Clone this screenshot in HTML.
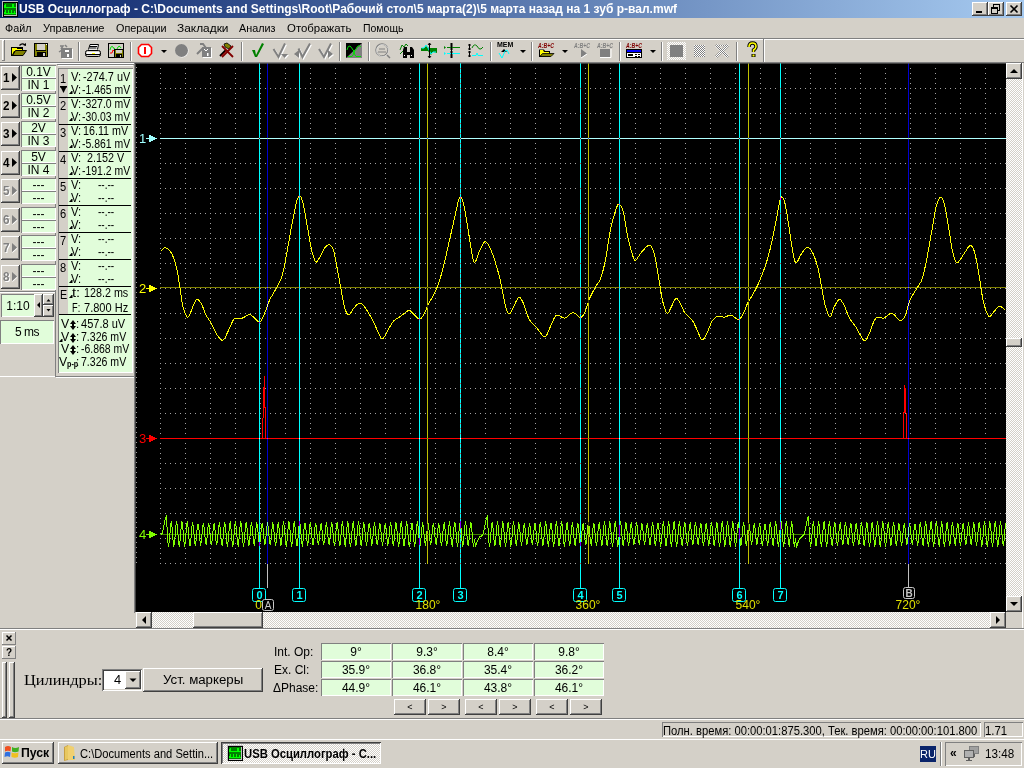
<!DOCTYPE html>
<html><head><meta charset="utf-8"><style>
*{margin:0;padding:0;box-sizing:border-box}
html,body{width:1024px;height:768px;overflow:hidden;background:#D4D0C8;font-family:"Liberation Sans",sans-serif;font-size:11px;color:#000}
.a{position:absolute}
.t{position:absolute;white-space:nowrap;line-height:13px}
.rz{position:absolute;background:#D4D0C8;box-shadow:inset -1px -1px #404040,inset 1px 1px #fff,inset -2px -2px #808080,inset 2px 2px #D4D0C8}
.rz1{position:absolute;background:#D4D0C8;box-shadow:inset -1px -1px #808080,inset 1px 1px #fff}
.sk{position:absolute;box-shadow:inset 1px 1px #808080,inset -1px -1px #fff}
.sk2{position:absolute;box-shadow:inset 1px 1px #808080,inset -1px -1px #fff,inset 2px 2px #404040,inset -2px -2px #D4D0C8}
.dith{background-color:#D4D0C8;background-image:linear-gradient(45deg,#fff 25%,transparent 25%,transparent 75%,#fff 75%),linear-gradient(45deg,#fff 25%,transparent 25%,transparent 75%,#fff 75%);background-size:2px 2px;background-position:0 0,1px 1px}
.vsep{position:absolute;width:2px;border-left:1px solid #808080;border-right:1px solid #fff}
.hsep{position:absolute;height:2px;border-top:1px solid #808080;border-bottom:1px solid #fff}
svg{position:absolute;overflow:visible}
</style></head><body>
<div class="a" style="left:0;top:0;width:1024px;height:18px;background:linear-gradient(to right,#0A246A,#A6CAF0)"></div>
<svg style="left:2px;top:1px" width="17" height="17" shape-rendering="crispEdges"><rect x="0" y="0" width="16" height="16" fill="#C0C0C0"/><rect x="1" y="1" width="15" height="15" fill="#000"/><rect x="2" y="2" width="13" height="13" fill="#C0C0C0"/><rect x="2" y="2" width="12" height="12" fill="#008000"/>
<g fill="#00FF00"><rect x="2" y="4" width="2" height="3"/><rect x="3" y="3" width="1" height="1"/><rect x="4" y="6" width="6" height="1"/><rect x="10" y="3" width="2" height="4"/><rect x="12" y="6" width="2" height="1"/>
<rect x="2" y="12" width="12" height="1"/><rect x="2" y="11" width="1" height="1"/><rect x="3" y="9" width="1" height="3"/><rect x="6" y="9" width="1" height="3"/><rect x="9" y="9" width="1" height="3"/><rect x="12" y="10" width="1" height="2"/></g></svg>
<div class="t" style="left:19px;top:2px;color:#fff;font-weight:bold;font-size:12px;line-height:14px;transform:scaleX(1.0020);transform-origin:0 0;">USB Осциллограф - C:\Documents and Settings\Root\Рабочий стол\5 марта(2)\5 марта назад на 1 зуб р-вал.mwf</div><div class="rz" style="left:972px;top:2px;width:16px;height:14px"></div><div class="rz" style="left:988px;top:2px;width:16px;height:14px"></div><div class="rz" style="left:1006px;top:2px;width:16px;height:14px"></div><svg style="left:972px;top:2px" width="16" height="14" shape-rendering="crispEdges"><rect x="4" y="9" width="6" height="2" fill="#000"/></svg>
<svg style="left:988px;top:2px" width="16" height="14" shape-rendering="crispEdges"><rect x="5" y="2" width="6" height="6" fill="none" stroke="#000" stroke-width="1" transform="translate(0.5,0.5)"/><rect x="5" y="2" width="6" height="1" fill="#000"/><rect x="3" y="5" width="6" height="6" fill="#D4D0C8" stroke="#000" transform="translate(0.5,0.5)"/><rect x="3" y="5" width="7" height="2" fill="#000"/></svg>
<svg style="left:1006px;top:2px" width="16" height="14"><path d="M4.5,3.5 L11.5,10.5 M11.5,3.5 L4.5,10.5" stroke="#000" stroke-width="1.6"/></svg>
<div class="t" style="left:5px;top:22px;transform:scaleX(0.9798);transform-origin:0 0;">Файл</div><div class="t" style="left:43px;top:22px;transform:scaleX(1.0056);transform-origin:0 0;">Управление</div><div class="t" style="left:116px;top:22px;transform:scaleX(0.9812);transform-origin:0 0;">Операции</div><div class="t" style="left:177px;top:22px;transform:scaleX(1.0817);transform-origin:0 0;">Закладки</div><div class="t" style="left:239px;top:22px;transform:scaleX(0.9828);transform-origin:0 0;">Анализ</div><div class="t" style="left:287px;top:22px;transform:scaleX(1.0380);transform-origin:0 0;">Отображать</div><div class="t" style="left:363px;top:22px;transform:scaleX(0.9529);transform-origin:0 0;">Помощь</div><div class="hsep" style="left:0;top:38px;width:1024px"></div><div class="rz1" style="left:2px;top:40px;width:3px;height:21px"></div><div class="a" style="left:0;top:62px;width:1024px;height:1px;background:#808080"></div><div class="vsep" style="left:78px;top:42px;height:19px"></div><div class="vsep" style="left:130px;top:42px;height:19px"></div><div class="vsep" style="left:241px;top:42px;height:19px"></div><div class="vsep" style="left:339px;top:42px;height:19px"></div><div class="vsep" style="left:368px;top:42px;height:19px"></div><div class="vsep" style="left:490px;top:42px;height:19px"></div><div class="vsep" style="left:531px;top:42px;height:19px"></div><div class="vsep" style="left:619px;top:42px;height:19px"></div><div class="vsep" style="left:661px;top:42px;height:19px"></div><div class="vsep" style="left:736px;top:42px;height:19px"></div><div class="vsep" style="left:763px;top:39px;height:23px"></div><svg style="left:0;top:0" width="770" height="62">
<!-- open folder -->
<path d="M19.5,45.5 Q22,42.5 25,45" fill="none" stroke="#000" stroke-width="1.2"/><path d="M23,45 L26,46 L26,43 Z" fill="#000"/>
<rect x="11" y="47" width="12" height="9" fill="#000"/><rect x="12" y="48" width="5" height="1" fill="#000"/>
<path d="M12,48 L17,48 L17,49 L22,49 L22,51 L14,51 L12,55 Z" fill="#FFFF00"/>
<path d="M12.5,55.5 L15.5,50.5 L26.5,50.5 L23,55.5 Z" fill="#808000" stroke="#000"/>
<!-- floppy -->
<rect x="34" y="43" width="14" height="14" fill="#000"/><rect x="35" y="44" width="12" height="12" fill="#808000"/>
<rect x="37" y="44" width="8" height="6" fill="#D4D0C8"/><rect x="36" y="50" width="10" height="1" fill="#000"/>
<rect x="37" y="52" width="9" height="5" fill="#000"/><rect x="43" y="53" width="2" height="3" fill="#D4D0C8"/><rect x="46" y="44" width="1" height="1" fill="#fff"/>
<!-- gray disabled -->
<path d="M60,46 L63,46 L61,49 M65,45 L67,47 M59,52 L62,50" stroke="#808080" stroke-width="1.5" fill="none"/>
<rect x="62" y="49" width="11" height="10" fill="#fff"/><rect x="61" y="48" width="11" height="10" fill="#808080"/>
<rect x="65" y="50" width="4" height="2" fill="#fff"/><rect x="67" y="54" width="2" height="3" fill="#fff"/>
<!-- printer -->
<path d="M88.5,49.5 L90,44.5 L98.5,44.5 L97.5,49.5" fill="#fff" stroke="#000"/>
<path d="M90,46.5 H97 M89.5,48 H96.5" stroke="#000"/>
<rect x="85.5" y="50.5" width="15" height="6" rx="2" fill="#D4D0C8" stroke="#000"/>
<rect x="87" y="52" width="12" height="2" fill="#fff"/><rect x="92" y="53" width="3" height="1" fill="#FFFF00"/>
<rect x="86" y="54" width="14" height="1" fill="#000"/>
<!-- save image -->
<rect x="108.5" y="43.5" width="15" height="14" fill="#D4D0C8" stroke="#000"/>
<path d="M110,50 Q111,45 113,47 Q114,50 115,48" stroke="#00E000" fill="none"/><path d="M117,49 Q119,44 121,48" stroke="#00E000" fill="none"/>
<path d="M110,53 L112,53 L113,50 L115,52" stroke="#FF0000" fill="none"/>
<rect x="114" y="49" width="10" height="9" fill="#000"/><rect x="115" y="50" width="8" height="7" fill="#808000"/>
<rect x="116" y="50" width="6" height="3" fill="#D4D0C8"/><rect x="116" y="54" width="6" height="3" fill="#000"/><rect x="120" y="55" width="1" height="2" fill="#D4D0C8"/>
<!-- stop -->
<path d="M141.5,44.5 L148.5,44.5 L151.5,47.5 L151.5,53.5 L148.5,56.5 L141.5,56.5 L138.5,53.5 L138.5,47.5 Z" fill="#fff" stroke="#FF0000" stroke-width="1.6"/>
<rect x="144" y="47" width="2" height="7" fill="#FF0000"/>
<path d="M161,50 L167,50 L164,53 Z" fill="#000"/>
<!-- gray circle -->
<circle cx="182" cy="51" r="6.5" fill="#fff"/><circle cx="181.5" cy="50.5" r="6.5" fill="#808080"/>
<!-- gray tool -->
<path d="M197,54 L203,48 M200,44 L203,44 L206,48" stroke="#808080" stroke-width="2" fill="none"/>
<rect x="203" y="48" width="9" height="10" fill="#fff"/><rect x="202" y="47" width="9" height="10" fill="#808080"/>
<path d="M204,49 L206,51 L208,49" stroke="#fff" fill="none"/><rect x="207" y="53" width="1.5" height="3" fill="#fff"/>
<!-- red x tool -->
<path d="M220,56 L226,50" stroke="#000" stroke-width="2"/><path d="M221,56 L227,50" stroke="#800000" stroke-width="1"/>
<path d="M224,44 L227,43 L231,46 L229,49 L225,47 Z" fill="#808000" stroke="#000" stroke-width="0.8"/>
<path d="M222,46 L233,57 M233,46 L222,57" stroke="#800000" stroke-width="1.8"/>
<!-- green check -->
<path d="M252,50 L255,50 L256,55 L262,43 L264,44 L257,57 L255,57 Z" fill="#008000"/>
<!-- gray checks -->
<g transform="translate(1,1)" fill="none" stroke="#fff" stroke-width="2"><path d="M273.5,49 L278.5,57 L285,43.5"/><path d="M298.5,48.5 L302.5,57 L310,43.5"/><path d="M319,49 L324,57 L331,43.5"/></g>
<g transform="translate(1,1)" fill="#fff"><path d="M281,54 L288,54 L284.5,58 Z"/><path d="M299,50 L294,54 L299,58 Z"/><path d="M328,50 L333,54 L328,58 Z"/></g>
<g fill="none" stroke="#808080" stroke-width="2"><path d="M273.5,49 L278.5,57 L285,43.5"/><path d="M298.5,48.5 L302.5,57 L310,43.5"/><path d="M319,49 L324,57 L331,43.5"/></g>
<g fill="#808080"><path d="M281,54 L288,54 L284.5,58 Z"/><path d="M299,50 L294,54 L299,58 Z"/><path d="M328,50 L333,54 L328,58 Z"/></g>
<!-- black/gray square -->
<rect x="346" y="43" width="16" height="15" fill="#808080"/><path d="M346,43 L362,43 L346,58 Z" fill="#000"/>
<path d="M347,50 Q348,45 350,46 Q352,48 353,50 Q355,53 357,47 Q359,44 361,47" stroke="#00E000" fill="none"/>
<path d="M348,56.5 L352,56.5 Q354,55 354,50 Q354,55 356,56.5 L361,56.5" stroke="#00E000" fill="none"/>
<!-- gray magnifier -->
<circle cx="382" cy="50" r="6" fill="none" stroke="#808080" stroke-width="1.5"/><circle cx="382.5" cy="50.5" r="6" fill="none" stroke="#fff" stroke-width="0.6"/>
<path d="M378,52 H386 M379,49 H385" stroke="#808080" stroke-width="1.2"/><path d="M387,55 L390,58" stroke="#808080" stroke-width="1.5"/>
<!-- binoculars -->
<path d="M400,50 L402,45 L404,47 L406,44 L408,46" stroke="#008000" fill="none"/><path d="M400,54 L403,51" stroke="#008000"/>
<path d="M404,47 H407 V58 H403 V50 Z M409,47 H412 L414,50 V58 H410 V47 Z M406,52 H411 V55 H406 Z" fill="#000"/>
<rect x="404" y="55" width="1" height="1" fill="#fff"/><rect x="411" y="55" width="1" height="1" fill="#fff"/>
<!-- green block -->
<path d="M421,48 L424,48 L426,46 L429,48 L437,48 L437,53 L433,52 L431,55 L428,51 L421,51 Z" fill="#008000"/>
<path d="M421.5,48 L424,48 L426,45 L428,48 L431,54 L433,52 L436,52" stroke="#00FFFF" fill="none"/>
<path d="M429.5,43 V58 M428,45 L429.5,43 L431,45 M428,56 L429.5,58 L431,56" stroke="#000" fill="none"/>
<!-- cursors -->
<path d="M447,47.5 H460" stroke="#008000"/><path d="M444,46 L446,47.5 L444,49 Z" fill="#008000"/>
<path d="M447,53.5 H460" stroke="#00FFFF"/><path d="M444,52 L446,53.5 L444,55 Z" fill="#00FFFF"/>
<path d="M451.5,43 V58" stroke="#000"/><path d="M450,44 H453 M450,46 H453 M450,49 H453 M450,52 H453 M450,55 H453 M450,57 H453" stroke="#000"/>
<!-- curves -->
<path d="M469.5,44 V50 M469.5,51 V57 M468,45 H471 M468,49 H471 M468,52 H471 M468,56 H471" stroke="#000"/>
<path d="M472,48 Q474,43 477,46 Q479,50 481,49 L483,47" stroke="#008000" fill="none"/>
<path d="M472,55.5 H476 L477,53 L478,55.5 H483" stroke="#00FFFF" fill="none"/>
<!-- MEM -->
<text x="497" y="47" font-family="Liberation Sans" font-size="7" font-weight="bold" fill="#000">MEM</text>
<path d="M501,52 L504,49 L507,52 Z" fill="#000"/><path d="M499,53 L502,58 L505,51 L507,50 L509,54" stroke="#00FFFF" fill="none"/>
<path d="M520,50 L526,50 L523,53 Z" fill="#000"/>
<!-- ABC open -->
<text x="538" y="48" font-family="Liberation Sans" font-size="7" font-weight="bold" font-style="italic" textLength="16" lengthAdjust="spacingAndGlyphs" fill="#800000">A:B+C</text>
<path d="M539,49.5 L544,49.5 L545,51 L550,51 L550,57 L539,57 Z" fill="#000"/><path d="M540,50 L543,50 L544,52 L549,52 L549,54 L542,54 L540,56 Z" fill="#FFFF00"/>
<path d="M540,56.5 L542.5,53.5 L554,53.5 L551,56.5 Z" fill="#808000" stroke="#000" stroke-width="0.8"/>
<path d="M562,50 L568,50 L565,53 Z" fill="#000"/>
<!-- ABC play gray -->
<text x="574" y="48" font-family="Liberation Sans" font-size="7" font-weight="bold" font-style="italic" textLength="16" lengthAdjust="spacingAndGlyphs" fill="#808080">A:B+C</text>
<path d="M581,49 L587,53.5 L581,58 Z" fill="#808080"/><path d="M581,58 L587,54" stroke="#fff"/>
<text x="597" y="48" font-family="Liberation Sans" font-size="7" font-weight="bold" font-style="italic" textLength="16" lengthAdjust="spacingAndGlyphs" fill="#808080">A:B+C</text>
<rect x="600" y="49" width="10" height="8" fill="#808080"/><path d="M600,57.5 H611 V49" stroke="#fff" fill="none"/>
<!-- ABC window -->
<text x="626" y="48" font-family="Liberation Sans" font-size="7" font-weight="bold" font-style="italic" textLength="16" lengthAdjust="spacingAndGlyphs" fill="#800000">A:B+C</text>
<rect x="626" y="49" width="16" height="9" fill="#000"/><rect x="627" y="50" width="14" height="2" fill="#0000FF"/><rect x="627" y="53" width="14" height="4" fill="#fff"/>
<rect x="628" y="54" width="5" height="2" fill="#000"/><rect x="635" y="54" width="2" height="1" fill="#000"/><rect x="638" y="54" width="2" height="1" fill="#000"/><rect x="635" y="56" width="2" height="1" fill="#000"/><rect x="638" y="56" width="2" height="1" fill="#000"/>
<path d="M650,50 L656,50 L653,53 Z" fill="#000"/>
<!-- dithered square -->
<rect x="667" y="42" width="19" height="18" fill="url(#dith)"/><rect x="670" y="45" width="13" height="12" fill="#808080"/>
<rect x="694" y="45" width="11" height="12" fill="url(#dithg)"/>
<path d="M716,45 L728,57 M728,45 L716,57" stroke="url(#dithg)" stroke-width="3"/><path d="M716,45.5 H728" stroke="url(#dithg)" stroke-width="1.5"/>
<!-- help -->
<path d="M749,47 Q749,43 752.5,43 Q756,43 756,46.5 Q756,48.5 753.5,50 L753.5,52" fill="none" stroke="#000" stroke-width="3.4"/>
<path d="M749,47 Q749,43 752.5,43 Q756,43 756,46.5 Q756,48.5 753.5,50 L753.5,52" fill="none" stroke="#FFFF00" stroke-width="1.6"/>
<rect x="751.5" y="54" width="4" height="3" fill="#000"/><rect x="752.5" y="54.5" width="2" height="2" fill="#FFFF00"/>
<defs>
<pattern id="dith" width="2" height="2" patternUnits="userSpaceOnUse"><rect width="2" height="2" fill="#D4D0C8"/><rect width="1" height="1" fill="#fff"/><rect x="1" y="1" width="1" height="1" fill="#fff"/></pattern>
<pattern id="dithg" width="2" height="2" patternUnits="userSpaceOnUse"><rect width="2" height="2" fill="#fff"/><rect width="1" height="1" fill="#808080"/><rect x="1" y="1" width="1" height="1" fill="#808080"/></pattern>
</defs>
</svg><div class="a" style="left:0;top:63px;width:135px;height:1px;background:#fff"></div><div class="a" style="left:0;top:65px;width:56px;height:1px;background:#808080"></div><div class="a" style="left:55px;top:65px;width:1px;height:312px;background:#808080"></div><div class="a" style="left:0;top:376px;width:55px;height:1px;background:#fff"></div><div class="a" style="left:55px;top:376px;width:80px;height:1px;background:#808080"></div><div class="a" style="left:56px;top:377px;width:79px;height:1px;background:#fff"></div><div class="rz" style="left:1px;top:66px;width:19px;height:24px"></div><div class="t" style="left:3px;top:71px;font-weight:bold;font-size:13px;line-height:14px;color:#000;transform:scaleX(0.8985);transform-origin:0 0;">1</div><svg style="left:12px;top:73px" width="6" height="10"><path d="M0,0 L5,4.5 L0,9 Z" fill="#000"/></svg><div class="sk" style="left:21px;top:65px;width:35px;height:13px;background:#E1FDDA"></div><div class="sk" style="left:21px;top:78px;width:35px;height:13px;background:#E1FDDA"></div><div class="t" style="left:21px;top:65px;width:35px;text-align:center;font-size:12px;line-height:14px;">0.1V</div><div class="t" style="left:21px;top:78px;width:35px;text-align:center;font-size:12px;line-height:14px;">IN 1</div><div class="rz" style="left:1px;top:94px;width:19px;height:24px"></div><div class="t" style="left:3px;top:99px;font-weight:bold;font-size:13px;line-height:14px;color:#000;transform:scaleX(0.8985);transform-origin:0 0;">2</div><svg style="left:12px;top:101px" width="6" height="10"><path d="M0,0 L5,4.5 L0,9 Z" fill="#000"/></svg><div class="sk" style="left:21px;top:93px;width:35px;height:13px;background:#E1FDDA"></div><div class="sk" style="left:21px;top:106px;width:35px;height:13px;background:#E1FDDA"></div><div class="t" style="left:21px;top:93px;width:35px;text-align:center;font-size:12px;line-height:14px;">0.5V</div><div class="t" style="left:21px;top:106px;width:35px;text-align:center;font-size:12px;line-height:14px;">IN 2</div><div class="rz" style="left:1px;top:122px;width:19px;height:24px"></div><div class="t" style="left:3px;top:127px;font-weight:bold;font-size:13px;line-height:14px;color:#000;transform:scaleX(0.8985);transform-origin:0 0;">3</div><svg style="left:12px;top:129px" width="6" height="10"><path d="M0,0 L5,4.5 L0,9 Z" fill="#000"/></svg><div class="sk" style="left:21px;top:121px;width:35px;height:13px;background:#E1FDDA"></div><div class="sk" style="left:21px;top:134px;width:35px;height:13px;background:#E1FDDA"></div><div class="t" style="left:21px;top:121px;width:35px;text-align:center;font-size:12px;line-height:14px;">2V</div><div class="t" style="left:21px;top:134px;width:35px;text-align:center;font-size:12px;line-height:14px;">IN 3</div><div class="rz" style="left:1px;top:151px;width:19px;height:24px"></div><div class="t" style="left:3px;top:156px;font-weight:bold;font-size:13px;line-height:14px;color:#000;transform:scaleX(0.8985);transform-origin:0 0;">4</div><svg style="left:12px;top:158px" width="6" height="10"><path d="M0,0 L5,4.5 L0,9 Z" fill="#000"/></svg><div class="sk" style="left:21px;top:150px;width:35px;height:13px;background:#E1FDDA"></div><div class="sk" style="left:21px;top:163px;width:35px;height:13px;background:#E1FDDA"></div><div class="t" style="left:21px;top:150px;width:35px;text-align:center;font-size:12px;line-height:14px;">5V</div><div class="t" style="left:21px;top:163px;width:35px;text-align:center;font-size:12px;line-height:14px;">IN 4</div><div class="rz" style="left:1px;top:179px;width:19px;height:24px"></div><div class="t" style="left:3px;top:184px;font-weight:bold;font-size:13px;line-height:14px;color:#808080;text-shadow:1px 1px #fff;transform:scaleX(0.8985);transform-origin:0 0;">5</div><svg style="left:12px;top:186px" width="6" height="10"><path d="M0,0 L5,4.5 L0,9 Z" fill="#808080"/><path d="M0.5,9.5 L5.5,5" stroke="#fff"/></svg><div class="sk" style="left:21px;top:178px;width:35px;height:13px;background:#E1FDDA"></div><div class="sk" style="left:21px;top:191px;width:35px;height:13px;background:#E1FDDA"></div><div class="t" style="left:21px;top:178px;width:35px;text-align:center;font-size:12px;line-height:14px;">---</div><div class="t" style="left:21px;top:191px;width:35px;text-align:center;font-size:12px;line-height:14px;">---</div><div class="rz" style="left:1px;top:208px;width:19px;height:24px"></div><div class="t" style="left:3px;top:213px;font-weight:bold;font-size:13px;line-height:14px;color:#808080;text-shadow:1px 1px #fff;transform:scaleX(0.8985);transform-origin:0 0;">6</div><svg style="left:12px;top:215px" width="6" height="10"><path d="M0,0 L5,4.5 L0,9 Z" fill="#808080"/><path d="M0.5,9.5 L5.5,5" stroke="#fff"/></svg><div class="sk" style="left:21px;top:207px;width:35px;height:13px;background:#E1FDDA"></div><div class="sk" style="left:21px;top:220px;width:35px;height:13px;background:#E1FDDA"></div><div class="t" style="left:21px;top:207px;width:35px;text-align:center;font-size:12px;line-height:14px;">---</div><div class="t" style="left:21px;top:220px;width:35px;text-align:center;font-size:12px;line-height:14px;">---</div><div class="rz" style="left:1px;top:236px;width:19px;height:24px"></div><div class="t" style="left:3px;top:241px;font-weight:bold;font-size:13px;line-height:14px;color:#808080;text-shadow:1px 1px #fff;transform:scaleX(0.8985);transform-origin:0 0;">7</div><svg style="left:12px;top:243px" width="6" height="10"><path d="M0,0 L5,4.5 L0,9 Z" fill="#808080"/><path d="M0.5,9.5 L5.5,5" stroke="#fff"/></svg><div class="sk" style="left:21px;top:235px;width:35px;height:13px;background:#E1FDDA"></div><div class="sk" style="left:21px;top:248px;width:35px;height:13px;background:#E1FDDA"></div><div class="t" style="left:21px;top:235px;width:35px;text-align:center;font-size:12px;line-height:14px;">---</div><div class="t" style="left:21px;top:248px;width:35px;text-align:center;font-size:12px;line-height:14px;">---</div><div class="rz" style="left:1px;top:265px;width:19px;height:24px"></div><div class="t" style="left:3px;top:270px;font-weight:bold;font-size:13px;line-height:14px;color:#808080;text-shadow:1px 1px #fff;transform:scaleX(0.8985);transform-origin:0 0;">8</div><svg style="left:12px;top:272px" width="6" height="10"><path d="M0,0 L5,4.5 L0,9 Z" fill="#808080"/><path d="M0.5,9.5 L5.5,5" stroke="#fff"/></svg><div class="sk" style="left:21px;top:264px;width:35px;height:13px;background:#E1FDDA"></div><div class="sk" style="left:21px;top:277px;width:35px;height:13px;background:#E1FDDA"></div><div class="t" style="left:21px;top:264px;width:35px;text-align:center;font-size:12px;line-height:14px;">---</div><div class="t" style="left:21px;top:277px;width:35px;text-align:center;font-size:12px;line-height:14px;">---</div><div class="hsep" style="left:0;top:291px;width:55px"></div><div class="sk" style="left:1px;top:294px;width:34px;height:23px;background:#E1FDDA"></div><div class="t" style="left:1px;top:298px;width:34px;text-align:center;font-size:12px;line-height:16px">1:10</div><div class="rz" style="left:34px;top:294px;width:9px;height:23px"></div><svg style="left:37px;top:302px" width="4" height="6"><path d="M3,0 L0,3 L3,6 Z" fill="#000"/></svg><div class="rz" style="left:43px;top:294px;width:11px;height:11px"></div><div class="rz" style="left:43px;top:305px;width:11px;height:12px"></div><svg style="left:45px;top:297px" width="8" height="18"><path d="M1.5,4.5 L3.5,2 L5.5,4.5 Z" fill="#000"/><path d="M1.5,12 L3.5,14.5 L5.5,12 Z" fill="#000"/></svg><div class="sk" style="left:0;top:320px;width:54px;height:24px;background:#E1FDDA"></div><div class="t" style="left:0;top:324px;width:54px;text-align:center;font-size:12px;line-height:16px;letter-spacing:-0.5px">5 ms</div><div class="a" style="left:57px;top:64px;width:77px;height:1px;background:#808080"></div><div class="a" style="left:58px;top:65px;width:75px;height:1px;background:#fff"></div><div class="sk" style="left:58px;top:68px;width:75px;height:305px;background:#E1FDDA"></div><div class="a" style="left:59px;top:69px;width:9px;height:246px;background:#D4D0C8"></div><div class="a" style="left:59px;top:97px;width:72px;height:1px;background:#000"></div><div class="a" style="left:59px;top:124px;width:72px;height:1px;background:#000"></div><div class="a" style="left:59px;top:151px;width:72px;height:1px;background:#000"></div><div class="a" style="left:59px;top:178px;width:72px;height:1px;background:#000"></div><div class="a" style="left:59px;top:205px;width:72px;height:1px;background:#000"></div><div class="a" style="left:59px;top:232px;width:72px;height:1px;background:#000"></div><div class="a" style="left:59px;top:259px;width:72px;height:1px;background:#000"></div><div class="a" style="left:59px;top:286px;width:72px;height:1px;background:#000"></div><div class="a" style="left:59px;top:314px;width:72px;height:1px;background:#000"></div><div class="t" style="left:60.4px;top:72px;font-size:12px;line-height:14px;transform:scaleX(0.9271);transform-origin:0 0;">1</div><div class="t" style="left:71.4px;top:70px;font-size:12px;line-height:14px;transform:scaleX(0.9352);transform-origin:0 0;">V:</div><div class="t" style="left:71.4px;top:83px;font-size:12px;line-height:14px;transform:scaleX(0.9352);transform-origin:0 0;">V:</div><svg style="left:69px;top:91px" width="6" height="4"><path d="M0,3 L2.5,0 L3.5,0 L3.5,3 Z" fill="#000"/></svg><div class="t" style="left:83.4px;top:70px;font-size:12px;line-height:14px;transform:scaleX(0.9069);transform-origin:0 0;">-274.7 uV</div><div class="t" style="left:82.4px;top:83px;font-size:12px;line-height:14px;transform:scaleX(0.8707);transform-origin:0 0;">-1.465 mV</div><div class="t" style="left:60.4px;top:99px;font-size:12px;line-height:14px;transform:scaleX(0.9271);transform-origin:0 0;">2</div><div class="t" style="left:71.4px;top:97px;font-size:12px;line-height:14px;transform:scaleX(0.9352);transform-origin:0 0;">V:</div><div class="t" style="left:71.4px;top:110px;font-size:12px;line-height:14px;transform:scaleX(0.9352);transform-origin:0 0;">V:</div><svg style="left:69px;top:118px" width="6" height="4"><path d="M0,3 L2.5,0 L3.5,0 L3.5,3 Z" fill="#000"/></svg><div class="t" style="left:82.4px;top:97px;font-size:12px;line-height:14px;transform:scaleX(0.8707);transform-origin:0 0;">-327.0 mV</div><div class="t" style="left:82.4px;top:110px;font-size:12px;line-height:14px;transform:scaleX(0.8707);transform-origin:0 0;">-30.03 mV</div><div class="t" style="left:60.4px;top:126px;font-size:12px;line-height:14px;transform:scaleX(0.9271);transform-origin:0 0;">3</div><div class="t" style="left:71.4px;top:124px;font-size:12px;line-height:14px;transform:scaleX(0.9352);transform-origin:0 0;">V:</div><div class="t" style="left:71.4px;top:137px;font-size:12px;line-height:14px;transform:scaleX(0.9352);transform-origin:0 0;">V:</div><svg style="left:69px;top:145px" width="6" height="4"><path d="M0,3 L2.5,0 L3.5,0 L3.5,3 Z" fill="#000"/></svg><div class="t" style="left:83.4px;top:124px;font-size:12px;line-height:14px;transform:scaleX(0.8953);transform-origin:0 0;">16.11 mV</div><div class="t" style="left:82.4px;top:137px;font-size:12px;line-height:14px;transform:scaleX(0.8707);transform-origin:0 0;">-5.861 mV</div><div class="t" style="left:60.4px;top:153px;font-size:12px;line-height:14px;transform:scaleX(0.9271);transform-origin:0 0;">4</div><div class="t" style="left:71.4px;top:151px;font-size:12px;line-height:14px;transform:scaleX(0.9352);transform-origin:0 0;">V:</div><div class="t" style="left:71.4px;top:164px;font-size:12px;line-height:14px;transform:scaleX(0.9352);transform-origin:0 0;">V:</div><svg style="left:69px;top:172px" width="6" height="4"><path d="M0,3 L2.5,0 L3.5,0 L3.5,3 Z" fill="#000"/></svg><div class="t" style="left:87.4px;top:151px;font-size:12px;line-height:14px;transform:scaleX(0.8991);transform-origin:0 0;">2.152 V</div><div class="t" style="left:82.4px;top:164px;font-size:12px;line-height:14px;transform:scaleX(0.8707);transform-origin:0 0;">-191.2 mV</div><div class="t" style="left:60.4px;top:180px;font-size:12px;line-height:14px;transform:scaleX(0.9271);transform-origin:0 0;">5</div><div class="t" style="left:71.4px;top:178px;font-size:12px;line-height:14px;transform:scaleX(0.9352);transform-origin:0 0;">V:</div><div class="t" style="left:71.4px;top:191px;font-size:12px;line-height:14px;transform:scaleX(0.9352);transform-origin:0 0;">V:</div><svg style="left:69px;top:199px" width="6" height="4"><path d="M0,3 L2.5,0 L3.5,0 L3.5,3 Z" fill="#000"/></svg><div class="t" style="left:98.4px;top:178px;font-size:12px;line-height:14px;transform:scaleX(0.8382);transform-origin:0 0;">--.--</div><div class="t" style="left:98.4px;top:191px;font-size:12px;line-height:14px;transform:scaleX(0.8382);transform-origin:0 0;">--.--</div><div class="t" style="left:60.4px;top:207px;font-size:12px;line-height:14px;transform:scaleX(0.9271);transform-origin:0 0;">6</div><div class="t" style="left:71.4px;top:205px;font-size:12px;line-height:14px;transform:scaleX(0.9352);transform-origin:0 0;">V:</div><div class="t" style="left:71.4px;top:218px;font-size:12px;line-height:14px;transform:scaleX(0.9352);transform-origin:0 0;">V:</div><svg style="left:69px;top:226px" width="6" height="4"><path d="M0,3 L2.5,0 L3.5,0 L3.5,3 Z" fill="#000"/></svg><div class="t" style="left:98.4px;top:205px;font-size:12px;line-height:14px;transform:scaleX(0.8382);transform-origin:0 0;">--.--</div><div class="t" style="left:98.4px;top:218px;font-size:12px;line-height:14px;transform:scaleX(0.8382);transform-origin:0 0;">--.--</div><div class="t" style="left:60.4px;top:234px;font-size:12px;line-height:14px;transform:scaleX(0.9271);transform-origin:0 0;">7</div><div class="t" style="left:71.4px;top:232px;font-size:12px;line-height:14px;transform:scaleX(0.9352);transform-origin:0 0;">V:</div><div class="t" style="left:71.4px;top:245px;font-size:12px;line-height:14px;transform:scaleX(0.9352);transform-origin:0 0;">V:</div><svg style="left:69px;top:253px" width="6" height="4"><path d="M0,3 L2.5,0 L3.5,0 L3.5,3 Z" fill="#000"/></svg><div class="t" style="left:98.4px;top:232px;font-size:12px;line-height:14px;transform:scaleX(0.8382);transform-origin:0 0;">--.--</div><div class="t" style="left:98.4px;top:245px;font-size:12px;line-height:14px;transform:scaleX(0.8382);transform-origin:0 0;">--.--</div><div class="t" style="left:60.4px;top:261px;font-size:12px;line-height:14px;transform:scaleX(0.9271);transform-origin:0 0;">8</div><div class="t" style="left:71.4px;top:259px;font-size:12px;line-height:14px;transform:scaleX(0.9352);transform-origin:0 0;">V:</div><div class="t" style="left:71.4px;top:272px;font-size:12px;line-height:14px;transform:scaleX(0.9352);transform-origin:0 0;">V:</div><svg style="left:69px;top:280px" width="6" height="4"><path d="M0,3 L2.5,0 L3.5,0 L3.5,3 Z" fill="#000"/></svg><div class="t" style="left:98.4px;top:259px;font-size:12px;line-height:14px;transform:scaleX(0.8382);transform-origin:0 0;">--.--</div><div class="t" style="left:98.4px;top:272px;font-size:12px;line-height:14px;transform:scaleX(0.8382);transform-origin:0 0;">--.--</div><svg style="left:60px;top:86px" width="8" height="8"><path d="M0,0 H7 L3.5,7 Z" fill="#000"/><rect x="0" y="0" width="7" height="1.5" fill="#000"/></svg><div class="t" style="left:60.4px;top:288px;font-size:12px;line-height:14px;transform:scaleX(0.8982);transform-origin:0 0;">E</div><svg style="left:69px;top:295px" width="6" height="4"><path d="M0,3 L2.5,0 L3.5,0 L3.5,3 Z" fill="#000"/></svg><div class="t" style="left:72.4px;top:286px;font-size:12px;line-height:14px;transform:scaleX(1.2290);transform-origin:0 0;">t:</div><div class="t" style="left:84.4px;top:286px;font-size:12px;line-height:14px;transform:scaleX(0.8955);transform-origin:0 0;">128.2 ms</div><div class="t" style="left:72.4px;top:301px;font-size:12px;line-height:14px;transform:scaleX(0.7684);transform-origin:0 0;">F:</div><div class="t" style="left:84.4px;top:301px;font-size:12px;line-height:14px;transform:scaleX(0.9202);transform-origin:0 0;">7.800 Hz</div><div class="t" style="left:61.4px;top:317px;font-size:12px;line-height:14px;transform:scaleX(1.0230);transform-origin:0 0;">V</div><svg style="left:70px;top:320px" width="7" height="11"><path d="M0,4 L3,0 L6,4 Z M0,6 L3,10 L6,6 Z" fill="#000"/><rect x="2" y="2" width="2" height="6" fill="#000"/></svg><div class="t" style="left:76.4px;top:317px;font-size:12px;line-height:14px;transform:scaleX(0.9570);transform-origin:0 0;">:</div><div class="t" style="left:81.4px;top:317px;font-size:12px;line-height:14px;transform:scaleX(0.9199);transform-origin:0 0;">457.8 uV</div><div class="t" style="left:61.4px;top:330px;font-size:12px;line-height:14px;transform:scaleX(1.0230);transform-origin:0 0;">V</div><svg style="left:70px;top:333px" width="7" height="11"><path d="M0,4 L3,0 L6,4 Z M0,6 L3,10 L6,6 Z" fill="#000"/><rect x="2" y="2" width="2" height="6" fill="#000"/></svg><div class="t" style="left:76.4px;top:330px;font-size:12px;line-height:14px;transform:scaleX(0.9570);transform-origin:0 0;">:</div><div class="t" style="left:81.4px;top:330px;font-size:12px;line-height:14px;transform:scaleX(0.8798);transform-origin:0 0;">7.326 mV</div><div class="t" style="left:61.4px;top:342px;font-size:12px;line-height:14px;transform:scaleX(1.0230);transform-origin:0 0;">V</div><svg style="left:70px;top:345px" width="7" height="11"><path d="M0,4 L3,0 L6,4 Z M0,6 L3,10 L6,6 Z" fill="#000"/><rect x="2" y="2" width="2" height="6" fill="#000"/></svg><div class="t" style="left:76.4px;top:342px;font-size:12px;line-height:14px;transform:scaleX(0.9570);transform-origin:0 0;">:</div><div class="t" style="left:81.4px;top:342px;font-size:12px;line-height:14px;transform:scaleX(0.8707);transform-origin:0 0;">-6.868 mV</div><svg style="left:59px;top:339px" width="6" height="4"><path d="M0,3 L2.5,0 L3.5,0 L3.5,3 Z" fill="#000"/></svg><div class="t" style="left:59.4px;top:355px;font-size:12px;line-height:14px;transform:scaleX(1.0230);transform-origin:0 0;">V</div><div class="t" style="left:67px;top:359px;font-size:9px;font-weight:bold;line-height:10px;transform:scaleX(0.8);transform-origin:0 0">p-p</div><div class="t" style="left:76.4px;top:355px;font-size:12px;line-height:14px;transform:scaleX(0.9570);transform-origin:0 0;">:</div><div class="t" style="left:81.4px;top:355px;font-size:12px;line-height:14px;transform:scaleX(0.8798);transform-origin:0 0;">7.326 mV</div><div class="a" style="left:134px;top:63px;width:1px;height:550px;background:#808080"></div><div class="a" style="left:135px;top:63px;width:871px;height:549px;background:#000;box-shadow:inset 1px 1px #404040"></div><svg style="left:0;top:0" width="1024" height="768">
<path d="M160,68V564M185,68V564M210,68V564M235,68V564M260,68V564M285,68V564M310,68V564M335,68V564M360,68V564M385,68V564M410,68V564M435,68V564M460,68V564M485,68V564M510,68V564M535,68V564M560,68V564M585,68V564M610,68V564M635,68V564M660,68V564M685,68V564M710,68V564M735,68V564M760,68V564M785,68V564M810,68V564M835,68V564M860,68V564M885,68V564M910,68V564M935,68V564M960,68V564M985,68V564" stroke="#A4A4A4" stroke-width="1" stroke-dasharray="1 4" shape-rendering="crispEdges" transform="translate(0.5,0)"/>
<path d="M160,88H1006M160,113H1006M160,138H1006M160,163H1006M160,188H1006M160,213H1006M160,238H1006M160,263H1006M160,288H1006M160,313H1006M160,338H1006M160,363H1006M160,388H1006M160,413H1006M160,438H1006M160,463H1006M160,488H1006M160,513H1006M160,538H1006M160,563H1006" stroke="#A4A4A4" stroke-width="1" stroke-dasharray="1 4" shape-rendering="crispEdges" transform="translate(0,0.5)"/>
<path d="M136,67V564" stroke="#A4A4A4" stroke-width="1" stroke-dasharray="1 4" shape-rendering="crispEdges" transform="translate(0.5,0)"/><g shape-rendering="crispEdges">
<rect x="160" y="138" width="846" height="1" fill="#B0FFFF"/>
<rect x="160" y="287" width="846" height="1" fill="#808000"/>
<rect x="160" y="438" width="846" height="1" fill="#FF0000"/>
<rect x="160" y="534" width="846" height="1" fill="#408000"/>
</g>
<text x="139" y="143" font-family="Liberation Sans" font-size="13" fill="#A0FFFF">1</text>
<g shape-rendering="crispEdges"><rect x="146" y="138" width="11" height="1" fill="#A0FFFF"/><rect x="149" y="135" width="2" height="7" fill="#A0FFFF"/><rect x="151" y="136" width="2" height="5" fill="#A0FFFF"/><rect x="153" y="137" width="2" height="3" fill="#A0FFFF"/></g>
<text x="139" y="293" font-family="Liberation Sans" font-size="13" fill="#FFFF00">2</text>
<g shape-rendering="crispEdges"><rect x="146" y="288" width="11" height="1" fill="#FFFF00"/><rect x="149" y="285" width="2" height="7" fill="#FFFF00"/><rect x="151" y="286" width="2" height="5" fill="#FFFF00"/><rect x="153" y="287" width="2" height="3" fill="#FFFF00"/></g>
<text x="139" y="443" font-family="Liberation Sans" font-size="13" fill="#FF0000">3</text>
<g shape-rendering="crispEdges"><rect x="146" y="438" width="11" height="1" fill="#FF0000"/><rect x="149" y="435" width="2" height="7" fill="#FF0000"/><rect x="151" y="436" width="2" height="5" fill="#FF0000"/><rect x="153" y="437" width="2" height="3" fill="#FF0000"/></g>
<text x="139" y="539" font-family="Liberation Sans" font-size="13" fill="#80FF00">4</text>
<g shape-rendering="crispEdges"><rect x="146" y="534" width="11" height="1" fill="#80FF00"/><rect x="149" y="531" width="2" height="7" fill="#80FF00"/><rect x="151" y="532" width="2" height="5" fill="#80FF00"/><rect x="153" y="533" width="2" height="3" fill="#80FF00"/></g>
<path fill="none" stroke="#FFFF00" stroke-width="1" shape-rendering="crispEdges" d="M160.6,251.5C161.2,250.9 163.0,248.3 164.3,248.0C165.6,247.7 167.1,248.1 168.5,249.4C169.9,250.7 171.3,252.3 172.7,255.6C174.1,258.9 175.6,263.6 176.8,269.0C178.0,274.4 179.0,281.7 180.0,288.0C181.0,294.3 181.8,301.9 183.0,306.7C184.2,311.5 186.0,315.9 187.2,317.0C188.5,318.1 189.2,315.4 190.4,313.0C191.6,310.6 193.3,304.8 194.5,302.5C195.7,300.2 196.5,299.0 197.7,299.4C198.9,299.8 200.4,302.0 201.8,304.6C203.2,307.2 204.4,311.9 206.0,315.0C207.6,318.1 209.5,320.2 211.2,323.3C212.9,326.4 214.5,330.9 216.4,333.8C218.3,336.6 220.8,340.7 222.7,340.4C224.6,340.1 226.0,335.2 227.9,331.7C229.8,328.2 231.9,321.4 234.0,319.2C236.1,317.0 238.7,319.1 240.4,318.8C242.2,318.4 242.9,317.7 244.5,317.0C246.1,316.3 248.2,314.5 249.8,314.6C251.3,314.7 252.3,316.2 254.0,317.5C255.7,318.8 258.0,322.9 259.8,322.3C261.5,321.7 262.7,317.6 264.3,314.0C265.9,310.4 267.9,304.1 269.5,300.4C271.1,296.7 272.7,294.6 274.2,292.0C275.7,289.4 277.1,287.2 278.3,284.8C279.5,282.4 280.4,280.8 281.5,277.5C282.6,274.2 283.4,270.9 284.6,265.0C285.8,259.1 287.4,249.6 288.8,242.0C290.1,234.4 291.5,226.1 292.9,219.2C294.3,212.3 295.8,204.2 297.0,200.4C298.2,196.6 299.1,195.6 300.2,196.2C301.2,196.9 302.1,199.4 303.3,204.6C304.5,209.8 306.1,219.9 307.5,227.5C308.9,235.1 310.3,244.7 311.7,250.4C313.1,256.1 314.4,260.8 315.8,261.9C317.2,262.9 318.4,259.1 320.0,256.7C321.6,254.3 323.6,249.3 325.2,247.3C326.8,245.3 328.0,244.1 329.4,244.6C330.8,245.1 332.1,246.0 333.5,250.4C334.9,254.8 336.3,263.9 337.7,271.2C339.1,278.6 340.7,287.9 341.9,294.2C343.1,300.4 343.9,305.3 345.0,308.8C346.1,312.2 347.4,315.0 348.8,315.0C350.1,315.0 351.7,310.7 353.3,308.8C354.9,306.8 356.9,304.2 358.5,303.5C360.1,302.8 361.1,303.2 362.7,304.6C364.3,306.0 366.0,308.8 367.9,311.9C369.8,315.0 372.5,319.8 374.2,323.3C375.9,326.8 376.9,330.1 378.3,332.7C379.7,335.3 380.9,339.5 382.5,339.0C384.1,338.5 386.4,332.6 388.2,329.6C390.0,326.6 391.5,323.4 393.4,321.2C395.3,319.1 397.7,318.4 399.6,317.0C401.5,315.6 403.2,314.1 404.8,313.0C406.4,311.9 407.8,310.1 409.4,310.4C411.0,310.7 412.5,313.1 414.2,314.6C415.9,316.1 417.8,319.1 419.4,319.2C421.0,319.3 422.0,317.6 423.6,315.0C425.2,312.4 427.1,307.0 428.8,303.5C430.5,300.0 432.3,297.8 434.0,294.2C435.7,290.6 437.5,286.9 439.2,281.7C440.9,276.5 442.8,269.1 444.4,262.9C446.0,256.6 447.0,251.1 448.6,244.2C450.2,237.3 452.2,228.2 453.8,221.2C455.4,214.3 456.9,206.5 458.0,202.5C459.1,198.5 459.7,196.6 460.7,197.3C461.7,198.0 462.9,201.0 464.2,206.7C465.5,212.4 467.0,223.4 468.4,231.7C469.8,240.0 471.4,251.7 472.5,256.7C473.6,261.7 474.0,262.9 475.2,261.9C476.5,260.8 478.2,253.8 479.8,250.4C481.4,247.0 483.3,242.0 485.0,241.7C486.7,241.3 488.5,244.8 490.2,248.3C492.0,251.8 493.9,258.0 495.5,262.9C497.1,267.8 498.5,273.0 499.6,277.5C500.7,282.0 501.1,284.8 502.2,290.0C503.3,295.2 505.1,304.8 506.3,308.8C507.5,312.8 508.3,314.3 509.5,314.0C510.7,313.7 512.1,309.5 513.6,306.7C515.1,303.9 517.2,298.0 518.8,297.3C520.4,296.6 521.3,298.9 523.0,302.5C524.7,306.1 527.0,315.0 529.2,319.2C531.5,323.4 533.9,324.6 536.5,327.5C539.1,330.4 542.6,336.9 544.9,336.9C547.1,336.9 548.1,331.1 550.0,327.5C551.9,323.9 553.8,317.0 556.3,315.4C558.8,313.8 561.9,318.6 564.7,318.1C567.5,317.6 570.4,312.6 573.0,312.5C575.6,312.4 578.4,317.4 580.3,317.5C582.2,317.6 582.9,316.1 584.5,312.9C586.1,309.7 587.8,302.7 589.7,298.3C591.6,293.9 594.2,289.4 595.9,286.2C597.6,283.1 598.5,283.8 600.1,279.6C601.7,275.4 603.6,269.1 605.3,260.8C607.0,252.5 608.7,238.3 610.5,229.6C612.3,220.9 614.7,213.0 616.2,208.8C617.7,204.5 618.1,203.5 619.3,204.2C620.5,204.9 622.1,207.6 623.5,212.9C624.9,218.2 626.2,229.2 627.6,235.8C629.0,242.4 630.5,248.4 631.8,252.5C633.1,256.6 633.7,260.4 635.3,260.4C636.9,260.4 638.9,255.0 641.2,252.5C643.5,250.0 647.0,245.4 649.1,245.2C651.2,245.0 652.4,247.8 653.7,251.5C655.0,255.2 655.8,261.4 656.8,267.1C657.8,272.8 658.9,279.9 659.9,285.8C660.9,291.7 661.8,297.9 663.0,302.5C664.2,307.1 665.8,312.6 667.2,313.3C668.6,314.0 669.9,309.2 671.4,306.7C672.9,304.2 674.6,298.6 676.2,298.3C677.8,298.0 679.3,302.2 680.8,304.6C682.2,307.0 683.0,310.3 684.9,312.9C686.8,315.5 690.1,317.2 692.2,320.2C694.3,323.1 695.8,327.3 697.4,330.6C699.0,333.9 700.4,339.5 702.0,340.0C703.6,340.5 705.1,336.9 706.8,333.8C708.5,330.6 710.3,324.1 712.0,321.2C713.7,318.4 715.1,317.2 717.2,316.5C719.3,315.8 722.3,317.4 724.5,317.1C726.7,316.9 728.6,315.0 730.2,315.0C731.8,315.0 732.8,316.2 734.3,317.0C735.8,317.8 737.3,320.3 738.9,319.6C740.5,318.9 742.2,315.8 743.7,312.9C745.2,310.0 746.4,305.6 747.9,302.5C749.4,299.4 751.3,297.3 753.0,294.2C754.7,291.1 756.2,288.6 758.3,283.8C760.4,278.9 763.5,271.2 765.6,265.0C767.7,258.8 769.1,253.5 770.8,246.2C772.5,239.0 774.4,229.1 776.0,221.2C777.6,213.4 779.0,203.2 780.2,199.4C781.4,195.6 782.3,196.4 783.3,198.3C784.3,200.2 785.2,204.2 786.4,210.8C787.6,217.4 789.4,230.2 790.6,237.9C791.8,245.6 792.7,252.5 793.7,256.7C794.7,260.9 795.2,263.2 796.4,262.9C797.6,262.5 799.3,257.2 801.0,254.6C802.7,252.0 804.9,247.7 806.8,247.3C808.7,247.0 810.7,249.2 812.5,252.5C814.3,255.8 816.2,261.6 817.7,267.1C819.2,272.7 820.2,279.6 821.4,285.8C822.6,292.1 823.6,299.4 825.0,304.6C826.4,309.8 828.2,316.6 829.8,317.0C831.3,317.4 832.7,309.6 834.3,306.7C835.9,303.8 837.9,299.6 839.5,299.4C841.1,299.2 842.6,302.5 844.2,305.6C845.9,308.7 847.5,314.6 849.4,318.1C851.3,321.6 853.7,323.6 855.6,326.5C857.5,329.4 859.2,333.4 860.8,335.8C862.4,338.2 863.6,341.3 865.0,341.0C866.4,340.7 867.6,337.2 869.2,333.8C870.8,330.3 872.9,323.0 874.4,320.2C875.9,317.4 876.9,317.5 878.5,317.1C880.1,316.8 881.5,318.7 883.8,318.1C886.0,317.5 889.2,312.9 892.0,313.3C894.8,313.8 898.1,320.5 900.4,320.8C902.7,321.1 904.1,318.3 905.6,315.0C907.1,311.7 907.6,305.7 909.6,301.0C911.6,296.3 915.7,290.5 917.7,286.9C919.8,283.3 920.5,283.6 921.9,279.6C923.3,275.6 924.4,270.7 926.0,262.9C927.6,255.1 929.8,242.1 931.5,232.7C933.2,223.3 934.7,212.5 936.2,206.6C937.7,200.7 939.1,197.6 940.5,197.3C941.9,197.0 943.1,199.6 944.5,204.6C945.9,209.6 947.2,219.5 948.6,227.5C950.0,235.5 951.4,246.6 952.8,252.5C954.2,258.4 955.2,262.5 957.0,262.9C958.8,263.2 961.4,257.4 963.5,254.6C965.6,251.8 968.0,246.5 969.8,245.8C971.5,245.1 972.6,246.5 974.0,250.4C975.4,254.3 976.7,261.6 978.1,269.2C979.5,276.8 981.1,289.7 982.3,296.2C983.5,302.8 984.2,305.3 985.4,308.8C986.5,312.2 987.8,316.2 989.2,316.7C990.6,317.2 992.0,313.6 993.8,311.9C995.5,310.2 997.7,306.5 999.6,306.2C1001.5,306.0 1004.3,309.7 1005.2,310.4"/>
<g shape-rendering="crispEdges" fill="#FF0000">
<rect x="262" y="418" width="1" height="20"/><rect x="263" y="387" width="1" height="31"/><rect x="264" y="376" width="1" height="31"/><rect x="265" y="407" width="1" height="31"/><rect x="263" y="407" width="2" height="1"/>
<rect x="903" y="412" width="1" height="26"/><rect x="904" y="385" width="1" height="28"/><rect x="905" y="388" width="1" height="25"/><rect x="906" y="413" width="1" height="25"/>
</g><polyline fill="none" stroke="#80FF00" stroke-width="1" shape-rendering="crispEdges" points="160.5,534 161.5,534 162.5,533 163.5,528 164.5,523 165.5,518 166.5,516 167.5,538 168.5,547 169.5,540 170.5,526 171.5,521 172.5,533 173.5,546 174.5,544 175.5,530 176.5,521 177.5,527 178.5,542 179.5,547 180.5,536 181.5,522 182.5,523 183.5,537 184.5,547 185.5,541 186.5,526 187.5,521 188.5,532 189.5,545 190.5,545 191.5,531 192.5,522 193.5,527 194.5,541 195.5,546 196.5,536 197.5,524 198.5,524 199.5,536 200.5,546 201.5,541 202.5,528 203.5,523 204.5,531 205.5,543 206.5,544 207.5,532 208.5,523 209.5,527 210.5,540 211.5,545 212.5,537 213.5,525 214.5,524 215.5,536 216.5,545 217.5,541 218.5,528 219.5,522 220.5,531 221.5,544 222.5,545 223.5,533 224.5,522 225.5,526 226.5,540 227.5,547 228.5,538 229.5,524 230.5,522 231.5,535 232.5,547 233.5,543 234.5,528 235.5,521 236.5,530 237.5,544 238.5,546 239.5,533 240.5,521 241.5,525 242.5,539 243.5,547 244.5,539 245.5,525 246.5,522 247.5,534 248.5,546 249.5,543 250.5,529 251.5,522 252.5,529 253.5,543 254.5,545 255.5,534 256.5,523 257.5,525 258.5,538 259.5,546 260.5,539 261.5,526 262.5,523 263.5,533 264.5,544 265.5,543 266.5,530 267.5,522 268.5,529 269.5,542 270.5,545 271.5,535 272.5,523 273.5,525 274.5,538 275.5,546 276.5,540 277.5,526 278.5,522 279.5,533 280.5,545 281.5,544 282.5,530 283.5,521 284.5,528 285.5,542 286.5,547 287.5,536 288.5,522 289.5,523 290.5,537 291.5,547 292.5,541 293.5,526 294.5,521 295.5,532 296.5,545 297.5,545 298.5,531 299.5,521 300.5,527 301.5,541 302.5,547 303.5,536 304.5,523 305.5,523 306.5,536 307.5,546 308.5,541 309.5,527 310.5,522 311.5,531 312.5,544 313.5,544 314.5,532 315.5,523 316.5,527 317.5,540 318.5,545 319.5,537 320.5,525 321.5,524 322.5,536 323.5,545 324.5,541 325.5,528 326.5,522 327.5,531 328.5,543 329.5,544 330.5,533 331.5,522 332.5,526 333.5,540 334.5,546 335.5,538 336.5,524 337.5,523 338.5,535 339.5,546 340.5,543 341.5,528 342.5,521 343.5,530 344.5,544 345.5,546 346.5,533 347.5,521 348.5,525 349.5,540 350.5,547 351.5,539 352.5,524 353.5,522 354.5,534 355.5,546 356.5,543 357.5,529 358.5,521 359.5,529 360.5,543 361.5,546 362.5,534 363.5,523 364.5,525 365.5,538 366.5,546 367.5,539 368.5,526 369.5,523 370.5,533 371.5,545 372.5,543 373.5,530 374.5,522 375.5,529 376.5,542 377.5,545 378.5,535 379.5,524 380.5,525 381.5,538 382.5,546 383.5,539 384.5,527 385.5,523 386.5,533 387.5,545 388.5,543 389.5,531 390.5,522 391.5,528 392.5,542 393.5,546 394.5,536 395.5,523 396.5,524 397.5,537 398.5,547 399.5,541 400.5,526 401.5,521 402.5,532 403.5,545 404.5,545 405.5,531 406.5,521 407.5,527 408.5,542 409.5,547 410.5,537 411.5,523 412.5,523 413.5,537 414.5,547 415.5,541 416.5,527 417.5,521 418.5,531 419.5,544 420.5,545 421.5,532 422.5,522 423.5,527 424.5,540 425.5,546 426.5,537 427.5,525 428.5,524 429.5,536 430.5,545 431.5,541 432.5,528 433.5,523 434.5,531 435.5,543 436.5,544 437.5,533 438.5,523 439.5,527 440.5,539 441.5,546 442.5,538 443.5,525 444.5,523 445.5,535 446.5,546 447.5,542 448.5,529 449.5,521 450.5,530 451.5,544 452.5,546 453.5,533 454.5,522 455.5,525 456.5,539 457.5,547 458.5,539 459.5,524 460.5,522 461.5,534 462.5,547 463.5,543 464.5,529 465.5,521 466.5,529 467.5,543 468.5,546 469.5,534 470.5,522 471.5,525 472.5,539 473.5,547 474.5,539 475.5,547 476.5,543 477.5,541 478.5,539 479.5,537 480.5,536 481.5,536 482.5,535 483.5,533 484.5,528 485.5,523 486.5,518 487.5,516 488.5,539 489.5,547 490.5,539 491.5,525 492.5,522 493.5,534 494.5,546 495.5,543 496.5,529 497.5,521 498.5,529 499.5,543 500.5,547 501.5,534 502.5,522 503.5,524 504.5,539 505.5,547 506.5,539 507.5,525 508.5,522 509.5,533 510.5,546 511.5,544 512.5,530 513.5,521 514.5,528 515.5,542 516.5,546 517.5,535 518.5,523 519.5,525 520.5,538 521.5,546 522.5,539 523.5,527 524.5,523 525.5,533 526.5,544 527.5,543 528.5,531 529.5,523 530.5,528 531.5,541 532.5,545 533.5,536 534.5,524 535.5,525 536.5,537 537.5,546 538.5,540 539.5,527 540.5,522 541.5,532 542.5,545 543.5,544 544.5,531 545.5,521 546.5,527 547.5,541 548.5,547 549.5,536 550.5,523 551.5,523 552.5,537 553.5,547 554.5,542 555.5,527 556.5,521 557.5,531 558.5,545 559.5,545 560.5,532 561.5,521 562.5,526 563.5,541 564.5,547 565.5,537 566.5,524 567.5,523 568.5,536 569.5,546 570.5,542 571.5,528 572.5,522 573.5,531 574.5,544 575.5,545 576.5,533 577.5,523 578.5,526 579.5,539 580.5,546 581.5,538 582.5,525 583.5,524 584.5,535 585.5,545 586.5,542 587.5,529 588.5,522 589.5,530 590.5,543 591.5,545 592.5,533 593.5,523 594.5,526 595.5,539 596.5,546 597.5,538 598.5,525 599.5,523 600.5,534 601.5,546 602.5,543 603.5,529 604.5,521 605.5,529 606.5,543 607.5,546 608.5,534 609.5,522 610.5,524 611.5,539 612.5,547 613.5,540 614.5,525 615.5,521 616.5,533 617.5,546 618.5,544 619.5,530 620.5,521 621.5,528 622.5,543 623.5,546 624.5,535 625.5,523 626.5,524 627.5,538 628.5,546 629.5,540 630.5,526 631.5,522 632.5,533 633.5,544 634.5,543 635.5,531 636.5,522 637.5,528 638.5,541 639.5,545 640.5,536 641.5,524 642.5,525 643.5,537 644.5,545 645.5,540 646.5,527 647.5,523 648.5,532 649.5,544 650.5,544 651.5,531 652.5,522 653.5,527 654.5,541 655.5,546 656.5,536 657.5,523 658.5,523 659.5,536 660.5,547 661.5,541 662.5,527 663.5,521 664.5,531 665.5,545 666.5,545 667.5,532 668.5,521 669.5,526 670.5,541 671.5,547 672.5,537 673.5,523 674.5,522 675.5,536 676.5,547 677.5,542 678.5,528 679.5,521 680.5,530 681.5,544 682.5,545 683.5,533 684.5,522 685.5,526 686.5,540 687.5,546 688.5,538 689.5,525 690.5,523 691.5,535 692.5,545 693.5,542 694.5,529 695.5,522 696.5,530 697.5,543 698.5,544 699.5,533 700.5,523 701.5,526 702.5,539 703.5,546 704.5,538 705.5,526 706.5,523 707.5,534 708.5,545 709.5,543 710.5,529 711.5,522 712.5,529 713.5,543 714.5,546 715.5,534 716.5,522 717.5,525 718.5,539 719.5,547 720.5,539 721.5,525 722.5,521 723.5,533 724.5,546 725.5,544 726.5,530 727.5,521 728.5,528 729.5,543 730.5,547 731.5,535 732.5,522 733.5,524 734.5,538 735.5,547 736.5,540 737.5,526 738.5,522 739.5,533 740.5,545 741.5,544 742.5,531 743.5,522 744.5,528 745.5,541 746.5,546 747.5,536 748.5,524 749.5,525 750.5,537 751.5,545 752.5,540 753.5,527 754.5,523 755.5,532 756.5,544 757.5,543 758.5,531 759.5,523 760.5,528 761.5,541 762.5,546 763.5,536 764.5,524 765.5,524 766.5,536 767.5,546 768.5,541 769.5,527 770.5,522 771.5,531 772.5,544 773.5,545 774.5,532 775.5,521 776.5,526 777.5,541 778.5,547 779.5,537 780.5,523 781.5,522 782.5,536 783.5,547 784.5,542 785.5,527 786.5,521 787.5,530 788.5,544 789.5,546 790.5,533 791.5,521 792.5,526 793.5,540 794.5,547 795.5,538 796.5,548 797.5,544 798.5,541 799.5,539 800.5,538 801.5,537 802.5,536 803.5,535 804.5,534 805.5,529 806.5,524 807.5,519 808.5,516 809.5,536 810.5,547 811.5,541 812.5,527 813.5,521 814.5,531 815.5,545 816.5,545 817.5,532 818.5,521 819.5,526 820.5,541 821.5,547 822.5,537 823.5,523 824.5,522 825.5,536 826.5,547 827.5,542 828.5,527 829.5,521 830.5,530 831.5,544 832.5,545 833.5,533 834.5,522 835.5,526 836.5,540 837.5,546 838.5,538 839.5,525 840.5,523 841.5,535 842.5,545 843.5,542 844.5,529 845.5,522 846.5,530 847.5,543 848.5,544 849.5,533 850.5,523 851.5,526 852.5,539 853.5,546 854.5,538 855.5,526 856.5,523 857.5,534 858.5,545 859.5,542 860.5,529 861.5,522 862.5,529 863.5,543 864.5,546 865.5,534 866.5,522 867.5,525 868.5,539 869.5,547 870.5,539 871.5,525 872.5,522 873.5,533 874.5,546 875.5,544 876.5,530 877.5,521 878.5,528 879.5,543 880.5,547 881.5,535 882.5,522 883.5,524 884.5,538 885.5,547 886.5,540 887.5,526 888.5,522 889.5,533 890.5,545 891.5,544 892.5,531 893.5,522 894.5,528 895.5,541 896.5,546 897.5,536 898.5,524 899.5,525 900.5,537 901.5,546 902.5,540 903.5,527 904.5,523 905.5,532 906.5,544 907.5,543 908.5,531 909.5,523 910.5,528 911.5,541 912.5,545 913.5,536 914.5,524 915.5,524 916.5,536 917.5,546 918.5,541 919.5,527 920.5,522 921.5,531 922.5,544 923.5,545 924.5,532 925.5,521 926.5,526 927.5,541 928.5,547 929.5,537 930.5,523 931.5,522 932.5,536 933.5,547 934.5,542 935.5,527 936.5,521 937.5,530 938.5,544 939.5,546 940.5,533 941.5,521 942.5,526 943.5,540 944.5,547 945.5,538 946.5,524 947.5,523 948.5,535 949.5,546 950.5,542 951.5,529 952.5,522 953.5,530 954.5,543 955.5,545 956.5,533 957.5,523 958.5,526 959.5,539 960.5,546 961.5,538 962.5,526 963.5,523 964.5,534 965.5,545 966.5,542 967.5,530 968.5,522 969.5,529 970.5,542 971.5,545 972.5,534 973.5,523 974.5,525 975.5,538 976.5,546 977.5,539 978.5,525 979.5,522 980.5,533 981.5,546 982.5,544 983.5,530 984.5,521 985.5,528 986.5,543 987.5,547 988.5,535 989.5,522 990.5,524 991.5,538 992.5,547 993.5,540 994.5,525 995.5,521 996.5,533 997.5,546 998.5,544 999.5,530 1000.5,521 1001.5,528 1002.5,542 1003.5,546 1004.5,536 1005.5,523"/>
<g shape-rendering="crispEdges" style="mix-blend-mode:difference">
<rect x="259" y="63" width="1" height="525" fill="#00FFFF"/>
<rect x="299" y="63" width="1" height="525" fill="#00FFFF"/>
<rect x="419" y="63" width="1" height="525" fill="#00FFFF"/>
<rect x="460" y="63" width="1" height="525" fill="#00FFFF"/>
<rect x="580" y="63" width="1" height="525" fill="#00FFFF"/>
<rect x="619" y="63" width="1" height="525" fill="#00FFFF"/>
<rect x="739" y="63" width="1" height="525" fill="#00FFFF"/>
<rect x="780" y="63" width="1" height="525" fill="#00FFFF"/>
<rect x="427" y="63" width="1" height="501" fill="#C0C000"/>
<rect x="588" y="63" width="1" height="501" fill="#C0C000"/>
<rect x="748" y="63" width="1" height="501" fill="#C0C000"/>
<rect x="267" y="63" width="1" height="501" fill="#0000D0"/>
<rect x="267" y="564" width="1" height="24" fill="#C0C0C0"/>
<rect x="908" y="63" width="1" height="501" fill="#0000D0"/>
<rect x="908" y="564" width="1" height="24" fill="#C0C0C0"/>
</g>
<rect x="252.5" y="588.5" width="13" height="13" rx="2" fill="#000" stroke="#00FFFF" stroke-width="1"/>
<text x="259.5" y="599" text-anchor="middle" font-family="Liberation Sans" font-size="11" font-weight="bold" fill="#00FFFF">0</text>
<rect x="292.5" y="588.5" width="13" height="13" rx="2" fill="#000" stroke="#00FFFF" stroke-width="1"/>
<text x="299.5" y="599" text-anchor="middle" font-family="Liberation Sans" font-size="11" font-weight="bold" fill="#00FFFF">1</text>
<rect x="412.5" y="588.5" width="13" height="13" rx="2" fill="#000" stroke="#00FFFF" stroke-width="1"/>
<text x="419.5" y="599" text-anchor="middle" font-family="Liberation Sans" font-size="11" font-weight="bold" fill="#00FFFF">2</text>
<rect x="453.5" y="588.5" width="13" height="13" rx="2" fill="#000" stroke="#00FFFF" stroke-width="1"/>
<text x="460.5" y="599" text-anchor="middle" font-family="Liberation Sans" font-size="11" font-weight="bold" fill="#00FFFF">3</text>
<rect x="573.5" y="588.5" width="13" height="13" rx="2" fill="#000" stroke="#00FFFF" stroke-width="1"/>
<text x="580.5" y="599" text-anchor="middle" font-family="Liberation Sans" font-size="11" font-weight="bold" fill="#00FFFF">4</text>
<rect x="612.5" y="588.5" width="13" height="13" rx="2" fill="#000" stroke="#00FFFF" stroke-width="1"/>
<text x="619.5" y="599" text-anchor="middle" font-family="Liberation Sans" font-size="11" font-weight="bold" fill="#00FFFF">5</text>
<rect x="732.5" y="588.5" width="13" height="13" rx="2" fill="#000" stroke="#00FFFF" stroke-width="1"/>
<text x="739.5" y="599" text-anchor="middle" font-family="Liberation Sans" font-size="11" font-weight="bold" fill="#00FFFF">6</text>
<rect x="773.5" y="588.5" width="13" height="13" rx="2" fill="#000" stroke="#00FFFF" stroke-width="1"/>
<text x="780.5" y="599" text-anchor="middle" font-family="Liberation Sans" font-size="11" font-weight="bold" fill="#00FFFF">7</text>
<text x="261" y="609" text-anchor="middle" font-family="Liberation Sans" font-size="12" fill="#E0E000">0°</text>
<text x="428" y="609" text-anchor="middle" font-family="Liberation Sans" font-size="12" fill="#E0E000">180°</text>
<text x="588" y="609" text-anchor="middle" font-family="Liberation Sans" font-size="12" fill="#E0E000">360°</text>
<text x="748" y="609" text-anchor="middle" font-family="Liberation Sans" font-size="12" fill="#E0E000">540°</text>
<text x="908" y="609" text-anchor="middle" font-family="Liberation Sans" font-size="12" fill="#E0E000">720°</text>
<rect x="262.5" y="599.5" width="11" height="11" rx="2" fill="#000" stroke="#C8C8C8"/>
<text x="268" y="609" text-anchor="middle" font-family="Liberation Sans" font-size="10" fill="#C8C8C8">A</text>
<rect x="903.5" y="587.5" width="11" height="11" rx="2" fill="#000" stroke="#C8C8C8"/>
<text x="909" y="597" text-anchor="middle" font-family="Liberation Sans" font-size="10" font-weight="bold" fill="#C8C8C8">B</text>
</svg><div class="a dith" style="left:1006px;top:63px;width:16px;height:549px"></div><div class="rz" style="left:1006px;top:63px;width:16px;height:16px"></div><svg style="left:1006px;top:63px" width="16" height="16"><path d="M4,10 L8,6 L12,10 Z" fill="#000"/></svg><div class="rz" style="left:1006px;top:338px;width:16px;height:9px"></div><div class="rz" style="left:1006px;top:596px;width:16px;height:16px"></div><svg style="left:1006px;top:596px" width="16" height="16"><path d="M4,6 L8,10 L12,6 Z" fill="#000"/></svg><div class="a dith" style="left:136px;top:612px;width:870px;height:16px"></div><div class="rz" style="left:136px;top:612px;width:16px;height:16px"></div><svg style="left:136px;top:612px" width="16" height="16"><path d="M10,4 L6,8 L10,12 Z" fill="#000"/></svg><div class="rz" style="left:193px;top:612px;width:70px;height:16px"></div><div class="rz" style="left:990px;top:612px;width:16px;height:16px"></div><svg style="left:990px;top:612px" width="16" height="16"><path d="M6,4 L10,8 L6,12 Z" fill="#000"/></svg><div class="a" style="left:1006px;top:612px;width:16px;height:16px;background:#D4D0C8"></div><div class="a" style="left:1022px;top:63px;width:1px;height:566px;background:#fff"></div><div class="hsep" style="left:0;top:628px;width:1024px"></div><div class="rz1" style="left:2px;top:632px;width:14px;height:13px"></div><svg style="left:2px;top:632px" width="14" height="13"><path d="M4.5,3.5 L9.5,8.5 M9.5,3.5 L4.5,8.5" stroke="#000" stroke-width="1.5"/></svg><div class="rz1" style="left:2px;top:646px;width:14px;height:13px"></div><div class="t" style="left:2px;top:646px;width:14px;text-align:center;font-weight:bold;font-size:10px;line-height:13px">?</div><div class="rz1" style="left:2px;top:662px;width:5px;height:56px;box-shadow:inset -1px -1px #404040,inset 1px 1px #fff,inset -2px -2px #808080"></div><div class="rz1" style="left:9px;top:662px;width:6px;height:56px;box-shadow:inset -1px -1px #404040,inset 1px 1px #fff,inset -2px -2px #808080"></div><div class="t" style="left:24.4px;top:671px;font-family:'Liberation Serif',serif;font-size:15px;line-height:18px;transform:scaleX(1.0894);transform-origin:0 0;">Цилиндры:</div><div class="sk2" style="left:102px;top:669px;width:40px;height:22px;background:#fff"></div><div class="t" style="left:114.4px;top:673px;font-size:12px;line-height:14px;transform:scaleX(1.0766);transform-origin:0 0;">4</div><div class="rz" style="left:125px;top:671px;width:16px;height:18px"></div><svg style="left:125px;top:671px" width="16" height="18"><path d="M4.5,7.5 L11.5,7.5 L8,11 Z" fill="#000"/></svg><div class="rz" style="left:143px;top:668px;width:120px;height:24px"></div><div class="t" style="left:163.4px;top:673px;font-size:12px;line-height:14px;transform:scaleX(1.1045);transform-origin:0 0;">Уст. маркеры</div><div class="t" style="left:274px;top:645px;font-size:12px;line-height:14px">Int. Op:</div><div class="t" style="left:274px;top:663px;font-size:12px;line-height:14px">Ex. Cl:</div><div class="t" style="left:273px;top:681px;font-size:12px;line-height:14px">ΔPhase:</div><div class="sk" style="left:321px;top:643px;width:70px;height:17px;background:#E1FDDA"></div><div class="t" style="left:321px;top:645px;width:70px;text-align:center;font-size:12px;line-height:14px">9°</div><div class="sk" style="left:392px;top:643px;width:70px;height:17px;background:#E1FDDA"></div><div class="t" style="left:392px;top:645px;width:70px;text-align:center;font-size:12px;line-height:14px">9.3°</div><div class="sk" style="left:463px;top:643px;width:70px;height:17px;background:#E1FDDA"></div><div class="t" style="left:463px;top:645px;width:70px;text-align:center;font-size:12px;line-height:14px">8.4°</div><div class="sk" style="left:534px;top:643px;width:70px;height:17px;background:#E1FDDA"></div><div class="t" style="left:534px;top:645px;width:70px;text-align:center;font-size:12px;line-height:14px">9.8°</div><div class="sk" style="left:321px;top:661px;width:70px;height:17px;background:#E1FDDA"></div><div class="t" style="left:321px;top:663px;width:70px;text-align:center;font-size:12px;line-height:14px">35.9°</div><div class="sk" style="left:392px;top:661px;width:70px;height:17px;background:#E1FDDA"></div><div class="t" style="left:392px;top:663px;width:70px;text-align:center;font-size:12px;line-height:14px">36.8°</div><div class="sk" style="left:463px;top:661px;width:70px;height:17px;background:#E1FDDA"></div><div class="t" style="left:463px;top:663px;width:70px;text-align:center;font-size:12px;line-height:14px">35.4°</div><div class="sk" style="left:534px;top:661px;width:70px;height:17px;background:#E1FDDA"></div><div class="t" style="left:534px;top:663px;width:70px;text-align:center;font-size:12px;line-height:14px">36.2°</div><div class="sk" style="left:321px;top:679px;width:70px;height:17px;background:#E1FDDA"></div><div class="t" style="left:321px;top:681px;width:70px;text-align:center;font-size:12px;line-height:14px">44.9°</div><div class="sk" style="left:392px;top:679px;width:70px;height:17px;background:#E1FDDA"></div><div class="t" style="left:392px;top:681px;width:70px;text-align:center;font-size:12px;line-height:14px">46.1°</div><div class="sk" style="left:463px;top:679px;width:70px;height:17px;background:#E1FDDA"></div><div class="t" style="left:463px;top:681px;width:70px;text-align:center;font-size:12px;line-height:14px">43.8°</div><div class="sk" style="left:534px;top:679px;width:70px;height:17px;background:#E1FDDA"></div><div class="t" style="left:534px;top:681px;width:70px;text-align:center;font-size:12px;line-height:14px">46.1°</div><div class="rz1" style="left:394px;top:699px;width:32px;height:16px;box-shadow:inset -1px -1px #404040,inset 1px 1px #fff,inset -2px -2px #808080"></div><div class="t" style="left:394px;top:700px;width:32px;text-align:center;font-size:9px;line-height:14px">&lt;</div><div class="rz1" style="left:428px;top:699px;width:32px;height:16px;box-shadow:inset -1px -1px #404040,inset 1px 1px #fff,inset -2px -2px #808080"></div><div class="t" style="left:428px;top:700px;width:32px;text-align:center;font-size:9px;line-height:14px">&gt;</div><div class="rz1" style="left:465px;top:699px;width:32px;height:16px;box-shadow:inset -1px -1px #404040,inset 1px 1px #fff,inset -2px -2px #808080"></div><div class="t" style="left:465px;top:700px;width:32px;text-align:center;font-size:9px;line-height:14px">&lt;</div><div class="rz1" style="left:499px;top:699px;width:32px;height:16px;box-shadow:inset -1px -1px #404040,inset 1px 1px #fff,inset -2px -2px #808080"></div><div class="t" style="left:499px;top:700px;width:32px;text-align:center;font-size:9px;line-height:14px">&gt;</div><div class="rz1" style="left:536px;top:699px;width:32px;height:16px;box-shadow:inset -1px -1px #404040,inset 1px 1px #fff,inset -2px -2px #808080"></div><div class="t" style="left:536px;top:700px;width:32px;text-align:center;font-size:9px;line-height:14px">&lt;</div><div class="rz1" style="left:570px;top:699px;width:32px;height:16px;box-shadow:inset -1px -1px #404040,inset 1px 1px #fff,inset -2px -2px #808080"></div><div class="t" style="left:570px;top:700px;width:32px;text-align:center;font-size:9px;line-height:14px">&gt;</div><div class="hsep" style="left:0;top:718px;width:1024px"></div><div class="sk" style="left:662px;top:722px;width:319px;height:15px"></div><div class="t" style="left:663.4px;top:724px;font-size:12px;line-height:14px;transform:scaleX(0.9341);transform-origin:0 0;">Полн. время: 00:00:01:875.300, Тек. время: 00:00:00:101.800</div><div class="sk" style="left:984px;top:722px;width:39px;height:15px"></div><div class="t" style="left:985.4px;top:724px;font-size:12px;line-height:14px;transform:scaleX(0.9504);transform-origin:0 0;">1.71</div><div class="a" style="left:0;top:739px;width:1024px;height:1px;background:#fff"></div><div class="rz" style="left:2px;top:742px;width:52px;height:22px"></div><svg style="left:4px;top:744px" width="16" height="16">
<path d="M1,3 Q4,1 7,3 L6.5,7.5 Q4,6 1,7.5 Z" fill="#F05020"/>
<path d="M8,3 Q11,5 15,3 L14.5,7.5 Q11,9 8,7.5 Z" fill="#40B020"/>
<path d="M1,8.5 Q4,7 6.5,8.5 L6,13 Q3.5,11.5 0.5,13 Z" fill="#3070E0"/>
<path d="M7.5,8.5 Q11,10 14.5,8.5 L14,13 Q11,14.5 7.5,13 Z" fill="#F0C020"/>
</svg><div class="t" style="left:21.4px;top:746px;font-weight:bold;font-size:12px;line-height:14px;transform:scaleX(1.0185);transform-origin:0 0;">Пуск</div><div class="rz" style="left:58px;top:742px;width:160px;height:22px"></div><svg style="left:62px;top:744px" width="16" height="18"><path d="M2,3 L6,1 L6,16 L2,17 Z" fill="#C8A040"/><path d="M6,1 L12,3 L13,16 L6,16 Z" fill="#F0D070"/><path d="M3,3 L6,2 V15 L3,16 Z" fill="#E8C860"/><rect x="11" y="12" width="1.5" height="3" fill="#2080C0"/></svg><div class="t" style="left:80.4px;top:747px;font-size:12px;line-height:14px;transform:scaleX(0.9288);transform-origin:0 0;">C:\Documents and Settin...</div><div class="a dith" style="left:221px;top:742px;width:160px;height:22px;box-shadow:inset 1px 1px #404040,inset -1px -1px #fff,inset 2px 2px #808080"></div><svg style="left:227px;top:745px" width="17" height="17" shape-rendering="crispEdges"><rect x="0" y="0" width="16" height="16" fill="#C0C0C0"/><rect x="1" y="1" width="15" height="15" fill="#000"/><rect x="2" y="2" width="13" height="13" fill="#C0C0C0"/><rect x="2" y="2" width="12" height="12" fill="#008000"/>
<g fill="#00FF00"><rect x="2" y="4" width="2" height="3"/><rect x="3" y="3" width="1" height="1"/><rect x="4" y="6" width="6" height="1"/><rect x="10" y="3" width="2" height="4"/><rect x="12" y="6" width="2" height="1"/>
<rect x="2" y="12" width="12" height="1"/><rect x="2" y="11" width="1" height="1"/><rect x="3" y="9" width="1" height="3"/><rect x="6" y="9" width="1" height="3"/><rect x="9" y="9" width="1" height="3"/><rect x="12" y="10" width="1" height="2"/></g></svg><div class="t" style="left:244.4px;top:747px;font-weight:bold;font-size:12px;line-height:14px;transform:scaleX(0.9397);transform-origin:0 0;">USB Осциллограф - C...</div><div class="a" style="left:920px;top:746px;width:16px;height:16px;background:#0A246A"></div><div class="t" style="left:920px;top:747px;width:16px;text-align:center;color:#fff;font-size:11px;line-height:14px">RU</div><div class="vsep" style="left:940px;top:742px;height:24px"></div><div class="sk" style="left:945px;top:742px;width:77px;height:24px"></div><div class="t" style="left:950px;top:746px;font-weight:bold;font-size:12px;line-height:14px">«</div><svg style="left:963px;top:745px" width="18" height="18"><rect x="6" y="1" width="10" height="8" fill="#808080"/><rect x="7" y="2" width="8" height="6" fill="#A0A0A0"/><rect x="10" y="9" width="2" height="3" fill="#606060"/>
<rect x="1" y="5" width="10" height="8" fill="#606060"/><rect x="2" y="6" width="8" height="6" fill="#B0B0B0"/><rect x="5" y="13" width="2" height="2" fill="#606060"/><rect x="3" y="15" width="6" height="1" fill="#606060"/></svg><div class="t" style="left:985.4px;top:747px;font-size:12px;line-height:14px;transform:scaleX(0.9723);transform-origin:0 0;">13:48</div></body></html>
